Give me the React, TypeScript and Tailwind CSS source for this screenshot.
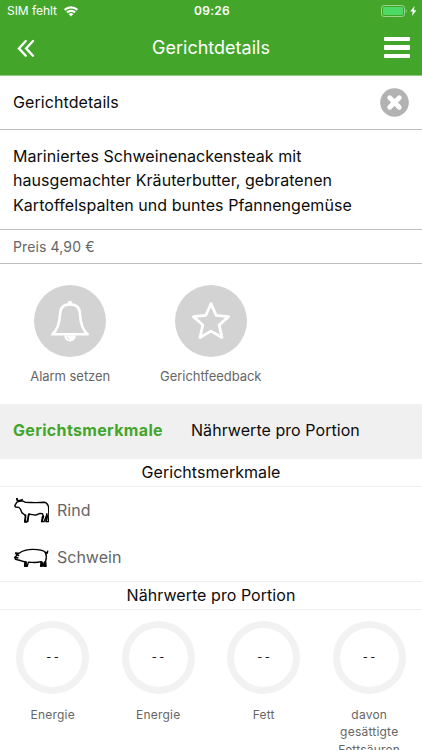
import type { ReactNode } from "react";

const nutrients = ["Energie", "Energie", "Fett", "davon gesättigte Fettsäuren"];

function StatusBar() {
  return (
    <div className="grid h-[22px] grid-cols-[1fr_auto_1fr] items-center pl-[7px] pr-[5px] text-[12px]">
      <div className="flex items-center gap-[7px]">
        <span className="tracking-[-0.05px]">SIM fehlt</span>
        <svg width="14" height="11" viewBox="0 0 14 11" fill="none" stroke="currentColor" strokeWidth="2.2">
          <path d="M0.7 3.900a9 9 0 0 1 12.600 0" />
          <path d="M3 6.500a5.700 5.700 0 0 1 8 0" />
          <path d="M7 10.600 4.700 8.300a3.200 3.200 0 0 1 4.600 0z" fill="currentColor" stroke="none" />
        </svg>
      </div>
      <span className="font-semibold tracking-[0.25px]">09:26</span>
      <div className="flex items-center justify-end gap-[3px]">
        <svg width="26" height="12" viewBox="0 0 26 12">
          <rect x="0.5" y="0.5" width="23" height="11" rx="2.6" fill="none" stroke="#9fd38f" />
          <rect x="2" y="2" width="20" height="8" rx="1.3" fill="#4cd964" />
          <path d="M24.800 4v4c1.200-.5 1.200-3.500 0-4z" fill="#9fd38f" />
        </svg>
        <svg width="7" height="10" viewBox="0 0 7 10" fill="currentColor">
          <path d="M4.500 0 .3 5.600h2.500L2 10l4.400-5.700H3.900z" />
        </svg>
      </div>
    </div>
  );
}

function Header() {
  return (
    <header className="h-[76px] border-b border-[#8fcb80] bg-[#43a62b] text-white">
      <StatusBar />
      <div className="grid h-[51px] grid-cols-[27px_1fr_30px] items-center pl-[15px] pr-[12px]">
        <svg
          width="20"
          height="20"
          viewBox="0 0 20 20"
          fill="none"
          stroke="currentColor"
          strokeWidth="2.3"
          strokeLinecap="round"
        >
          <path d="M10.800 3 3.900 10.400l6.900 7.300M18 3l-6.900 7.400 6.900 7.300" />
        </svg>
        <h1 className="text-center text-[18px]">Gerichtdetails</h1>
        <div className="flex w-[26px] flex-col gap-1 justify-self-end">
          <span className="h-[4.500px] rounded-[1px] bg-white" />
          <span className="h-[4.500px] rounded-[1px] bg-white" />
          <span className="h-[4.500px] rounded-[1px] bg-white" />
        </div>
      </div>
    </header>
  );
}

function Action({ label, children }: { label: string; children: ReactNode }) {
  return (
    <div className="flex w-[140.500px] flex-col items-center">
      <div className="flex size-[72px] items-center justify-center rounded-full bg-[#d3d3d3]">{children}</div>
      <span className="mt-[10px] text-[13px] leading-[18px] tracking-[-0.05px] text-[#666]">{label}</span>
    </div>
  );
}

function SectionTitle({ children }: { children: ReactNode }) {
  return (
    <h2 className="h-[28px] border-b border-[#efefef] text-center text-[16px] leading-[27px] tracking-[0.05px]">
      {children}
    </h2>
  );
}

function Cow() {
  return (
    <svg
      width="35"
      height="26"
      viewBox="0 0 35 26"
      fill="none"
      stroke="#000"
      strokeWidth="1.400"
      strokeLinejoin="round"
      strokeLinecap="round"
    >
      <path d="M3 1 3.800 3.200 2.600 4.600.8 7.600l.6 1.400 3.400.4 1.800 2 1.200 3.200 3 2.400.8 1.800-1 5.200h2.200l1.600-5 .6-3.200c2.600.8 4.400.8 6 1.400 1.800-.5 3.400-.8 5-1.800l2.400.4 1.200 2.800-1.800 5h2.200l2.200-5 .6-3 .6 3-1.300 5h2.400l.4-5.800-.3-9C33.600 6 32.800 4.600 30.400 4.300 24 4.800 16 4.600 11.200 4.200L8.400 2.800 6 3 8.200 1.500M3.800 3.200 6 3" />
      <path d="m11.600 17-.5 6.500M14.600 16.500l-.8 7M28.600 18.500l-.9 5M32.800 18l-.6 5.500" strokeWidth="1.600" />
      <path d="M6.400 2.500 4.200 3.400M3 1l.8 2" strokeWidth="2" />
    </svg>
  );
}

function Pig() {
  return (
    <svg
      width="35"
      height="20"
      viewBox="0 0 35 20"
      fill="none"
      stroke="#000"
      strokeWidth="1.400"
      strokeLinejoin="round"
      strokeLinecap="round"
    >
      <path d="M1.800 5.200h3.400C9 2.200 13 1.400 19 1.400c6 0 10.300.8 12.400 3 1.600 3.600 1.100 6.100.2 8.600l.5 5.200h-2.300l-.8-3.400-.8 3.400h-1.600l.6-4.500c-4 1.100-8 1.100-12.800.4l-1.200 4.100h-2.600l.3-4.400C8.500 13.800 7.300 12.600 5.400 12.200L1.400 11.400.8 9.200l2.200-1.800z" />
      <path d="M31.600 4.400 33.200 5.200 33.600 3.400M1.800 5.200l2.700 2.200M1.400 9.600l2.300.3" strokeWidth="1.600" />
      <path d="M11.900 14v3.800M27.800 14.200v3.400M31 14l-.1 3.600" strokeWidth="2" />
    </svg>
  );
}

export default function App() {
  return (
    <div className="h-[750px] overflow-hidden bg-white font-[Inter,'Liberation_Sans',sans-serif] text-[#0c0c0c]">
      <Header />

      <div className="flex h-[54px] items-center justify-between border-b border-[#bdbdbd] px-[13px]">
        <span className="pb-px text-[16px] tracking-[0.08px]">Gerichtdetails</span>
        <svg width="29" height="29" viewBox="0 0 29 29">
          <circle cx="14.500" cy="14.500" r="14.300" fill="#b2b2b2" />
          <path d="m9.700 9.700 9.600 9.600M19.300 9.700l-9.600 9.600" stroke="#fff" strokeWidth="4.800" strokeLinecap="round" />
        </svg>
      </div>

      <p className="h-[100px] border-b border-[#bdbdbd] pl-[13px] pr-12 pt-[14px] text-[16px] leading-[24.300px] tracking-[0.05px]">
        Mariniertes Schweinenackensteak mit
        <br />
        hausgemachter Kräuterbutter, gebratenen
        <br />
        Kartoffelspalten und buntes Pfannengemüse
      </p>

      <p className="h-[34px] border-b border-[#bdbdbd] pl-[13px] text-[14px] leading-[33px] tracking-[0.12px] text-[#666]">
        Preis 4,90 €
      </p>

      <div className="flex h-[140px] pt-[21px]">
        <Action label="Alarm setzen">
          <svg
            width="40"
            height="44"
            viewBox="0 0 40 44"
            fill="none"
            stroke="#fff"
            strokeWidth="2.600"
            strokeLinejoin="round"
          >
            <path d="M20 5.400C13.500 5.400 10.300 9 10 15 9.600 24.500 8 30.500 2.300 35.300h35.400C32 30.500 30.400 24.500 30 15 29.700 9 26.500 5.400 20 5.400z" />
            <circle cx="20" cy="4" r="1" />
            <path d="M15.500 36.500a4.600 4.800 0 0 0 9.200 0" fill="#fff" />
            <path d="M17 37.500q.5 2.500 2.700 2.900" stroke="#d3d3d3" strokeWidth="0.700" />
          </svg>
        </Action>
        <Action label="Gerichtfeedback">
          <svg width="40" height="40" viewBox="0 0 40 40" fill="none" stroke="#fff" strokeWidth="2.800" strokeLinejoin="round">
            <path d="m20 2.700 5.100 11.600 12.500 1.300-9.400 8.400 2.800 12.500L20 30.100 9 36.500l2.800-12.500-9.400-8.400 12.500-1.300z" />
          </svg>
        </Action>
      </div>

      <nav className="flex h-[55px] items-center gap-7 bg-[#f0f0f0] pb-[3px] pl-[13px] text-[16px]">
        <span className="w-[150px] whitespace-nowrap font-bold tracking-[0.34px] text-[#43a62b]">Gerichtsmerkmale</span>
        <span className="tracking-[0.05px]">Nährwerte pro Portion</span>
      </nav>

      <SectionTitle>Gerichtsmerkmale</SectionTitle>
      <ul className="h-[94px] text-[16px] text-[#666]">
        <li className="flex h-[47px] items-center gap-2 pl-[14px]">
          <Cow />
          <span className="pb-[2px]">Rind</span>
        </li>
        <li className="flex h-[47px] items-center gap-2 pl-[14px]">
          <Pig />
          <span className="pb-[2px]">Schwein</span>
        </li>
      </ul>

      <div className="border-t border-[#efefef]">
        <SectionTitle>Nährwerte pro Portion</SectionTitle>
      </div>
      <div className="grid grid-cols-4 pt-[11px]">
        {nutrients.map((name, i) => (
          <div key={i} className="flex flex-col items-center">
            <div className="flex size-[73px] items-center justify-center rounded-full border-[7px] border-[#f2f2f2] pl-[2px] text-[11px] tracking-[2.500px]">
              --
            </div>
            <span className="mt-[12px] w-[80px] text-center text-[12px] leading-[17.300px] tracking-[0.22px] text-[#666]">
              {name}
            </span>
          </div>
        ))}
      </div>
    </div>
  );
}
